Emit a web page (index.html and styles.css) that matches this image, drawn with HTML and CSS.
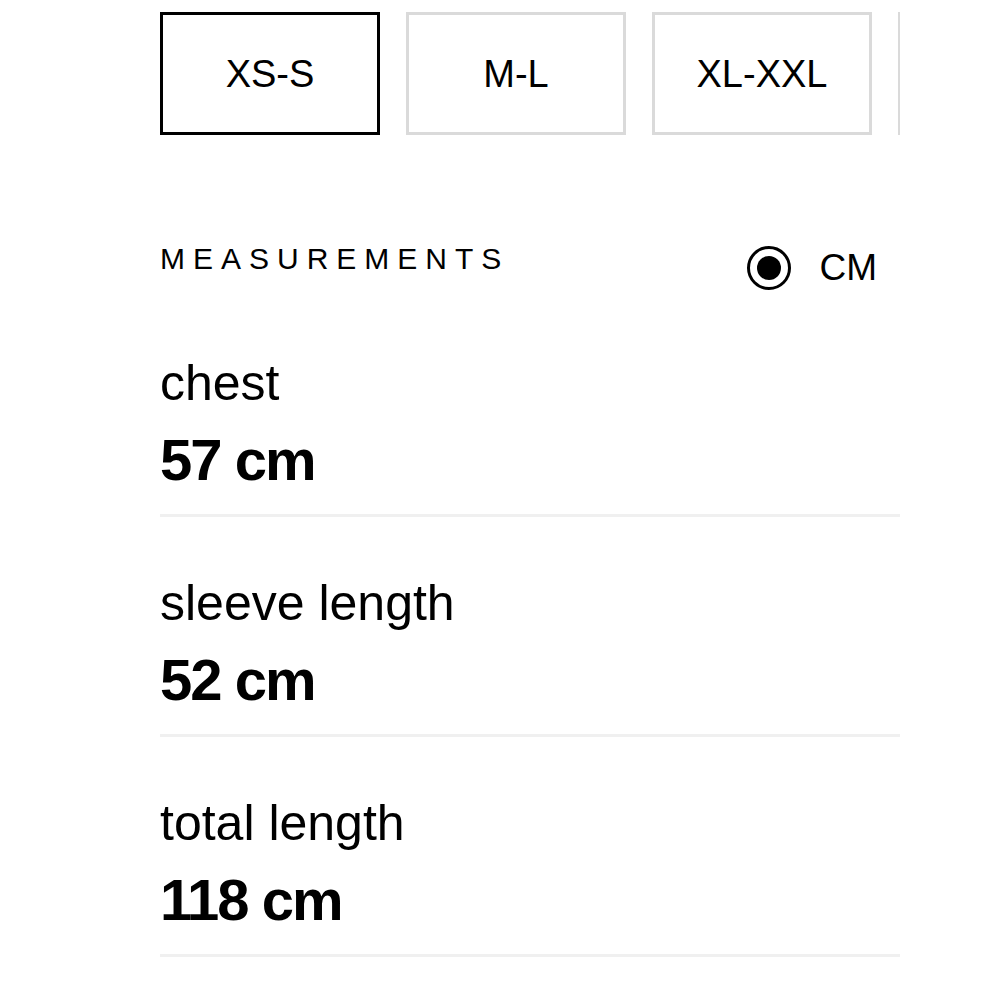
FILE: index.html
```html
<!DOCTYPE html>
<html>
<head>
<meta charset="utf-8">
<link rel="stylesheet" href="styles.css">
</head>
<body>
<div class="panel">
  <div class="sizes">
    <button class="size active">XS-S</button>
    <button class="size">M-L</button>
    <button class="size">XL-XXL</button>
    <button class="size" aria-label="3XL"></button>
  </div>
  <div class="header">
    <span class="title">MEASUREMENTS</span>
    <label class="unit">
      <span class="radio"><span class="dot"></span></span>
      <span class="unit-label">CM</span>
    </label>
  </div>
  <div class="rows">
    <div class="row">
      <div class="label">chest</div>
      <div class="value">57 cm</div>
    </div>
    <div class="row">
      <div class="label">sleeve length</div>
      <div class="value">52 cm</div>
    </div>
    <div class="row">
      <div class="label">total length</div>
      <div class="value">118 cm</div>
    </div>
  </div>
</div>
</body>
</html>
```
FILE: styles.css
```css
html, body {
  margin: 0;
  padding: 0;
  background: #fff;
}
body {
  font-family: "Liberation Sans", Arial, sans-serif;
  color: #000;
}
.panel {
  margin-left: 160px;
  width: 740px;
  padding-top: 12px;
}
.sizes {
  display: flex;
  gap: 26px;
  overflow: hidden;
}
.size {
  flex: 0 0 220px;
  height: 123px;
  box-sizing: border-box;
  background: #fff;
  border: 3px solid #dadada;
  font-family: "Liberation Sans", Arial, sans-serif;
  font-size: 38px;
  color: #000;
  padding: 0 0 0 0;
  line-height: 1;
}
.size.active {
  border-color: #000;
}
.header {
  margin-top: 106px;
  display: flex;
  justify-content: space-between;
  align-items: flex-start;
  padding-right: 23px;
}
.title {
  font-size: 30px;
  line-height: 36px;
  letter-spacing: 8px;
}
.unit {
  display: flex;
  align-items: center;
  gap: 28px;
  margin-top: 5px;
}
.radio {
  width: 44px;
  height: 44px;
  box-sizing: border-box;
  border: 3px solid #000;
  border-radius: 50%;
  display: flex;
  align-items: center;
  justify-content: center;
}
.dot {
  width: 24px;
  height: 24px;
  border-radius: 50%;
  background: #000;
}
.unit-label {
  font-size: 37px;
  line-height: 44px;
}
.rows {
  margin-top: 63px;
}
.row {
  border-bottom: 3px solid #f0f0f0;
  padding-bottom: 19px;
  margin-bottom: 56px;
}
.label {
  font-size: 50px;
  line-height: 60px;
  margin-bottom: 12px;
}
.value {
  font-size: 58px;
  line-height: 70px;
  font-weight: 700;
  letter-spacing: -2px;
}
```
